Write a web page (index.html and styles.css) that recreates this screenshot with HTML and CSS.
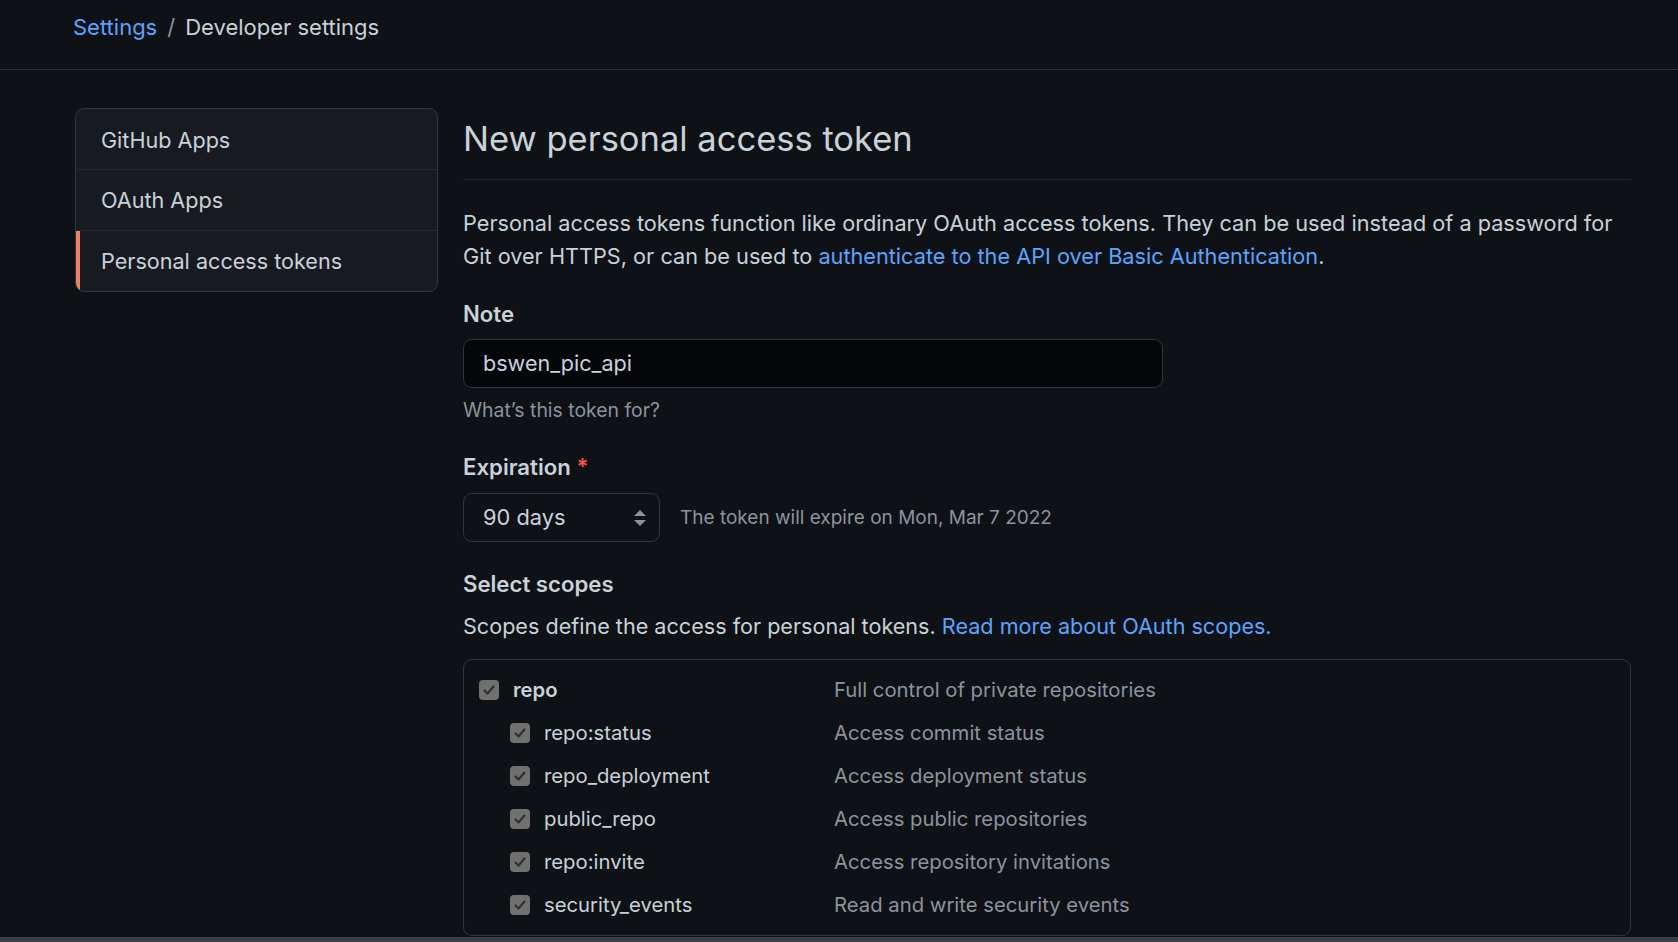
FILE: index.html
```html
<!DOCTYPE html>
<html lang="en">
<head>
<meta charset="utf-8">
<title>New personal access token</title>
<link rel="stylesheet" href="styles.css">
</head>
<body>
<header class="topbar">
  <nav class="crumbs"><a class="link" href="#">Settings</a><span class="sep">/</span><span class="current">Developer settings</span></nav>
</header>
<div class="layout">
  <aside class="sidenav">
    <a class="nav-item" href="#">GitHub Apps</a>
    <a class="nav-item" href="#">OAuth Apps</a>
    <a class="nav-item active" href="#">Personal access tokens</a>
  </aside>
  <main class="content">
    <h1 class="subhead">New personal access token</h1>
    <p class="intro">Personal access tokens function like ordinary OAuth access tokens. They can be used instead of a password for Git over HTTPS, or can be used to <a class="link" href="#">authenticate to the API over Basic Authentication</a>.</p>

    <label class="label">Note</label>
    <div class="input">bswen_pic_api</div>
    <p class="hint">What’s this token for?</p>

    <label class="label label-exp">Expiration <span class="req">*</span></label>
    <div class="exp-row">
      <div class="select">90 days
        <svg class="updown" width="12" height="16" viewBox="0 0 12 16"><path d="M6 0 L12 6 H0 Z M0 10 H12 L6 16 Z" fill="#8b949e"/></svg>
      </div>
      <span class="exp-note">The token will expire on Mon, Mar 7 2022</span>
    </div>

    <h3 class="label scopes-title">Select scopes</h3>
    <p class="scopes-desc">Scopes define the access for personal tokens. <a class="link" href="#">Read more about OAuth scopes.</a></p>

    <div class="scopes">
      <div class="scope parent"><span class="cb"><svg width="14" height="14" viewBox="0 0 14 14"><path d="M2.5 7.5 L5.5 10.5 L11.5 3.5" fill="none" stroke="#2f3033" stroke-width="2.2" stroke-linecap="round" stroke-linejoin="round"/></svg></span><span class="name">repo</span><span class="desc">Full control of private repositories</span></div>
      <div class="scope child"><span class="cb"><svg width="14" height="14" viewBox="0 0 14 14"><path d="M2.5 7.5 L5.5 10.5 L11.5 3.5" fill="none" stroke="#2f3033" stroke-width="2.2" stroke-linecap="round" stroke-linejoin="round"/></svg></span><span class="name">repo:status</span><span class="desc">Access commit status</span></div>
      <div class="scope child"><span class="cb"><svg width="14" height="14" viewBox="0 0 14 14"><path d="M2.5 7.5 L5.5 10.5 L11.5 3.5" fill="none" stroke="#2f3033" stroke-width="2.2" stroke-linecap="round" stroke-linejoin="round"/></svg></span><span class="name">repo_deployment</span><span class="desc">Access deployment status</span></div>
      <div class="scope child"><span class="cb"><svg width="14" height="14" viewBox="0 0 14 14"><path d="M2.5 7.5 L5.5 10.5 L11.5 3.5" fill="none" stroke="#2f3033" stroke-width="2.2" stroke-linecap="round" stroke-linejoin="round"/></svg></span><span class="name">public_repo</span><span class="desc">Access public repositories</span></div>
      <div class="scope child"><span class="cb"><svg width="14" height="14" viewBox="0 0 14 14"><path d="M2.5 7.5 L5.5 10.5 L11.5 3.5" fill="none" stroke="#2f3033" stroke-width="2.2" stroke-linecap="round" stroke-linejoin="round"/></svg></span><span class="name">repo:invite</span><span class="desc">Access repository invitations</span></div>
      <div class="scope child"><span class="cb"><svg width="14" height="14" viewBox="0 0 14 14"><path d="M2.5 7.5 L5.5 10.5 L11.5 3.5" fill="none" stroke="#2f3033" stroke-width="2.2" stroke-linecap="round" stroke-linejoin="round"/></svg></span><span class="name">security_events</span><span class="desc">Read and write security events</span></div>
    </div>
  </main>
</div>
<div class="bottom-bar"></div>
</body>
</html>
```

FILE: styles.css
```css
* { box-sizing: border-box; }
html, body { margin: 0; padding: 0; }
body {
  background: #0e1116;
  color: #c9d1d9;
  font-family: Inter, "Noto Sans", "Liberation Sans", sans-serif;
  font-size: 21.4px;
  line-height: 33px;
  height: 942px;
  overflow: hidden;
}
a { text-decoration: none; }
.link { color: #58a6ff; }

.topbar {
  height: 70px;
  border-bottom: 1px solid #2b2f35;
  padding-left: 73px;
  padding-top: 11px;
}
.crumbs { font-size: 22px; line-height: 33px; }
.crumbs .sep { color: #8b949e; margin: 0 10px; }
.crumbs .current { color: #c9d1d9; }

.layout {
  display: flex;
  gap: 25px;
  padding-left: 75px;
  padding-top: 38px;
}
.sidenav {
  width: 363px;
  flex: none;
  align-self: flex-start;
  background: #171b21;
  border: 1px solid #30363d;
  border-radius: 9px;
  overflow: hidden;
  display: flex;
  flex-direction: column;
}
.nav-item {
  display: block;
  height: 61px;
  line-height: 61px;
  padding-left: 25px;
  color: #c9d1d9;
  font-size: 21.6px;
  border-top: 1px solid #23272e;
}
.nav-item:first-child { border-top: 0; height: 60px; line-height: 62px; }
.nav-item.active { box-shadow: inset 4px 0 0 #f0805f; }

.content {
  width: 1168px;
  flex: none;
  padding-top: 8px;
}
.subhead {
  margin: 0;
  font-size: 34.5px;
  font-weight: 400;
  line-height: 45px;
  padding-bottom: 18px;
  border-bottom: 1px solid #21262d;
  color: #c9d1d9;
}
.intro { margin: 27px 0 0; font-size: 21.7px; }
.label {
  display: block;
  font-weight: 600;
  font-size: 22.2px;
  line-height: 33px;
  margin-top: 24px;
  color: #c9d1d9;
}
.input {
  margin-top: 9px;
  width: 700px;
  height: 49px;
  background: #04060a;
  border: 1px solid #30363d;
  border-radius: 9px;
  padding-left: 19px;
  line-height: 47px;
  font-size: 21.6px;
  color: #c9d1d9;
}
.hint {
  margin: 9px 0 0;
  font-size: 19.4px;
  line-height: 27px;
  color: #8b949e;
}
.label-exp { margin-top: 26px; }
.req { color: #f85149; }
.exp-row {
  margin-top: 10px;
  display: flex;
  align-items: center;
  gap: 20px;
}
.select {
  position: relative;
  width: 197px;
  height: 49px;
  border: 1px solid #30363d;
  border-radius: 9px;
  background: #0e1116;
  padding-left: 19px;
  line-height: 47px;
  font-size: 21.8px;
}
.updown { position: absolute; right: 13px; top: 16px; }
.exp-note { font-size: 19px; color: #8b949e; }
.scopes-title { margin: 25px 0 0; }
.scopes-desc { margin: 10px 0 0; font-size: 21.6px; }
.scopes {
  margin-top: 16px;
  border: 1px solid #30363d;
  border-radius: 9px;
  padding: 8px 0 9px;
}
.scope {
  display: flex;
  align-items: center;
  height: 43px;
  font-size: 20.3px;
}
.cb {
  width: 20px;
  height: 20px;
  background: #707070;
  border-radius: 4px;
  display: flex;
  align-items: center;
  justify-content: center;
  flex: none;
}
.scope.parent { padding-left: 15px; }
.scope.parent .name { font-weight: 600; width: 321px; }
.scope.child { padding-left: 46px; }
.scope.child .name { width: 290px; }
.scope .name { margin-left: 14px; color: #c9d1d9; }
.scope .desc { color: #8b949e; }
.bottom-bar {
  position: fixed;
  left: 0; right: 0; bottom: 0;
  height: 5px;
  background: #3a3d42;
}
```
